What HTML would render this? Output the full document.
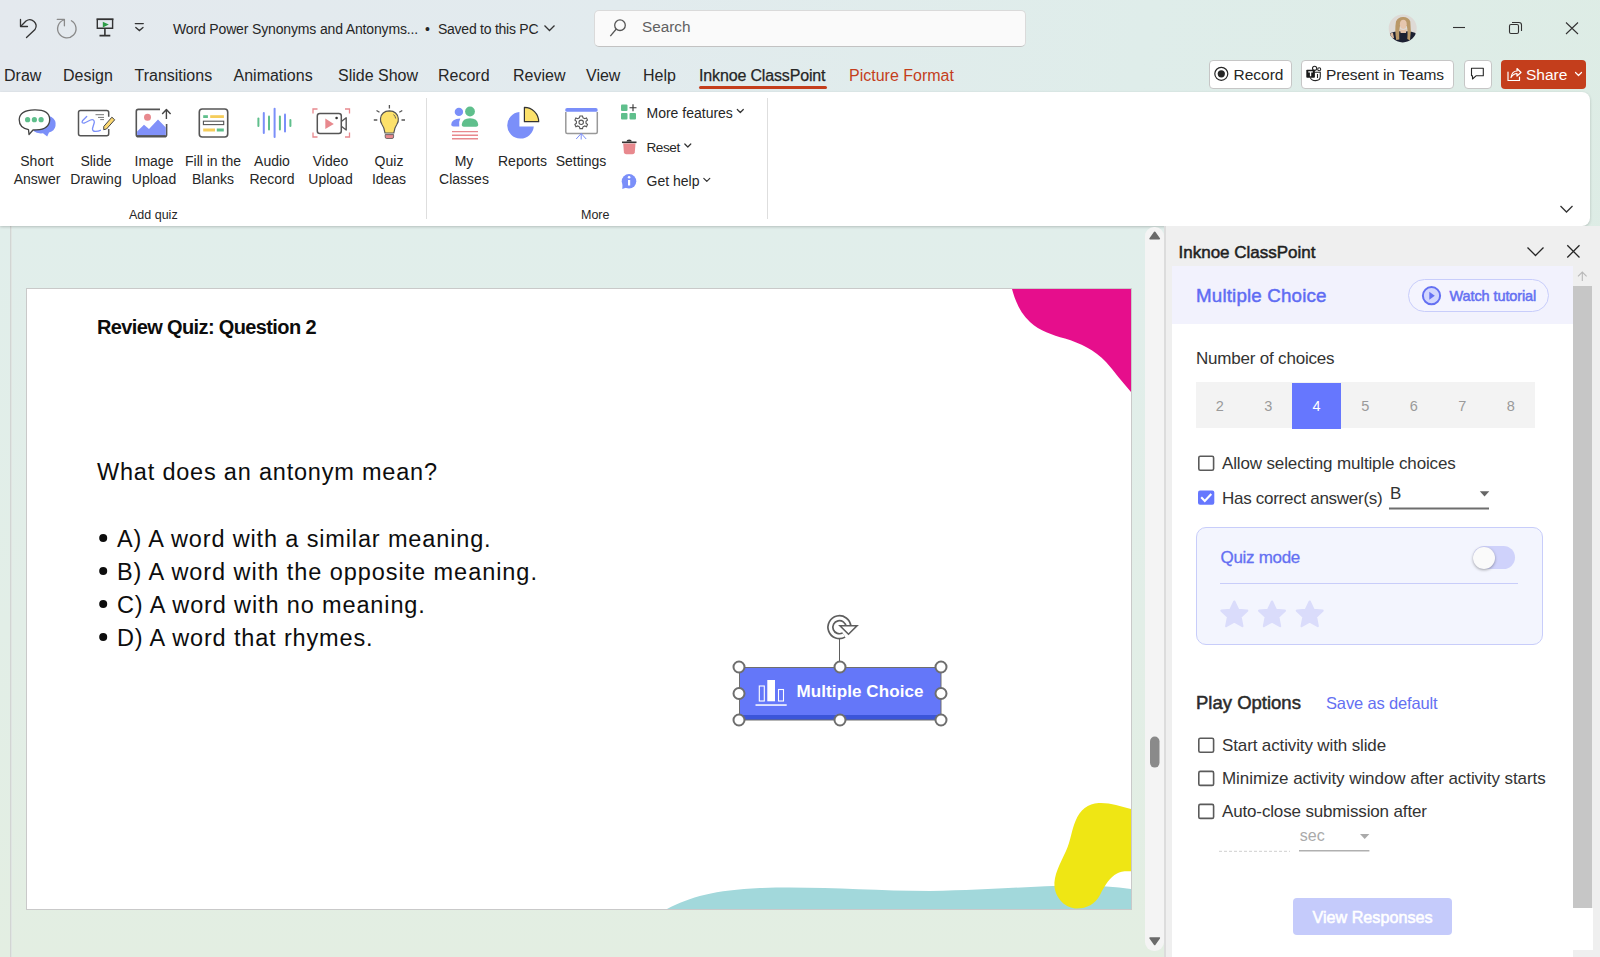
<!DOCTYPE html>
<html><head><meta charset="utf-8">
<style>
*{box-sizing:border-box;margin:0;padding:0}
html,body{width:1600px;height:957px;overflow:hidden}
body{position:relative;font-family:"Liberation Sans",sans-serif;color:#262626;
background:linear-gradient(100deg,#e4e9ee 0%,#e2ebee 35%,#dfedea 65%,#ddece4 100%)}
.a{position:absolute}
.t{position:absolute;line-height:1;white-space:nowrap}
svg{position:absolute;overflow:visible}
#canvasbg{left:0;top:226px;width:1166px;height:731px;background:linear-gradient(180deg,#e1eeeb 0%,#e2eee7 55%,#e3eee2 100%)}
#ribbon{left:0;top:92px;width:1590px;height:134px;background:#fff;border-radius:0 8px 8px 0;box-shadow:0 1px 3px rgba(0,0,0,.2)}
#slide{left:26px;top:288px;width:1106px;height:622px;background:#fff;border:1px solid #c9c9c9;overflow:hidden}
#pane{left:1164px;top:226px;width:436px;height:731px;background:#efefef;border-left:2px solid #dcdcdc}
.tab{font-size:16px;color:#262626;top:68px}
.lbl{font-size:14px;color:#262626;text-align:center}
.btn{position:absolute;background:#fff;border:1px solid #c6c6c6;border-radius:4px;top:60px;height:29px}
</style></head><body>
<div class="a" id="canvasbg"></div>
<div class="a" style="left:10px;top:226px;width:1px;height:731px;background:#d2d5d3"></div><div class="a" style="left:11px;top:226px;width:1px;height:731px;background:#dfe5e2"></div>

<!-- ===== TITLE BAR ===== -->
<svg style="left:0;top:0" width="160" height="50" viewBox="0 0 160 50">
  <g fill="none" stroke="#333" stroke-width="1.3" stroke-linecap="round" stroke-linejoin="round">
    <path d="M20.5 19.5 V26.5 H27.5"/>
    <path d="M20.8 26.2 L26 21 A6.3 6.3 0 0 1 35 29.5 L26.5 37.5"/>
  </g>
  <g fill="none" stroke="#8a8a8a" stroke-width="1.3" stroke-linecap="round" stroke-linejoin="round">
    <path d="M57.3 19.4 H64.4 V25.8"/>
    <path d="M63.8 20 A9.2 9.2 0 1 0 71.4 20.7"/>
  </g>
  <g fill="none" stroke="#333" stroke-width="1.4">
    <path d="M96.5 19.2 H113.5" stroke-width="1.8"/>
    <path d="M97.3 19.5 V28.3 H112.6 V19.5"/>
    <path d="M104.9 28.3 V35.5 M99.5 35.6 H110.3" stroke-width="1.6"/>
  </g>
  <path d="M102.8 21.8 L108.8 24.6 L102.8 27.4Z" fill="#2c9c46"/>
  <g fill="none" stroke="#333" stroke-width="1.3" stroke-linecap="round">
    <path d="M135.3 23.6 H143.3"/>
    <path d="M135.8 27.4 L139.4 30.6 L143 27.4"/>
  </g>
</svg>
<div class="t" style="left:173px;top:22px;font-size:14px;color:#262626;letter-spacing:-0.15px">Word Power Synonyms and Antonyms...</div>
<div class="t" style="left:425px;top:22px;font-size:14px;color:#262626">•</div>
<div class="t" style="left:438px;top:22px;font-size:14px;color:#262626;letter-spacing:-0.25px">Saved to this PC</div>
<svg style="left:0;top:0" width="600" height="50"><path d="M544.5 25.5 L549.5 30.5 L554.5 25.5" fill="none" stroke="#333" stroke-width="1.3"/></svg>

<div class="a" style="left:594px;top:10px;width:432px;height:37px;background:#fafafa;border:1px solid #dadada;border-bottom-color:#c2c2c2;border-radius:5px"></div>
<svg style="left:0;top:0" width="700" height="50"><g fill="none" stroke="#555" stroke-width="1.3"><circle cx="620" cy="25.2" r="5.3"/><path d="M616.3 29 L610.3 36.2"/></g></svg>
<div class="t" style="left:642px;top:19px;font-size:15.3px;color:#616161">Search</div>

<svg style="left:0;top:0" width="1600" height="50">
  <defs><clipPath id="av"><circle cx="1402.7" cy="28.4" r="14"/></clipPath></defs>
  <g clip-path="url(#av)">
    <rect x="1388" y="14" width="30" height="30" fill="#dedad6"/>
    <path d="M1388 44 L1390.5 33 Q1396 30.5 1403 31.5 Q1410 30.5 1415.5 33 L1418 44Z" fill="#1b2032"/>
    <path d="M1390 35 Q1391 32 1393 33 L1394 38 Q1391 39 1390 35Z" fill="#d9b9a0"/>
    <path d="M1396.2 40 Q1394.5 30 1396 21.5 Q1398 16.8 1403.3 17 Q1408.5 17 1410.3 21.5 Q1411.5 30 1410 40.5 L1407.3 39 Q1408 30 1406.8 26 L1400 26 Q1399 30 1399.3 39.5Z" fill="#b99868"/>
    <ellipse cx="1403.3" cy="24.3" rx="3.4" ry="4.6" fill="#e6c6ae"/>
    <path d="M1400 29 Q1403.3 31 1406.6 29 L1406 33 H1400.6Z" fill="#e2c1a8"/>
  </g>
  <g fill="none" stroke="#333" stroke-width="1.1">
    <path d="M1453 27.5 H1465"/>
    <rect x="1509.5" y="24.5" width="9" height="9" rx="1.5"/>
    <path d="M1512 22.5 H1519 Q1521.5 22.5 1521.5 25 V31"/>
    <path d="M1566 22.5 L1578 34 M1578 22.5 L1566 34"/>
  </g>
</svg>

<!-- ===== TABS ===== -->
<div class="t tab" style="left:4px">Draw</div>
<div class="t tab" style="left:63px">Design</div>
<div class="t tab" style="left:134.5px">Transitions</div>
<div class="t tab" style="left:233.5px">Animations</div>
<div class="t tab" style="left:338px">Slide Show</div>
<div class="t tab" style="left:438px">Record</div>
<div class="t tab" style="left:513px">Review</div>
<div class="t tab" style="left:586px">View</div>
<div class="t tab" style="left:643px">Help</div>
<div class="t tab" style="left:699px;letter-spacing:-0.15px;-webkit-text-stroke:0.25px #262626">Inknoe ClassPoint</div>
<div class="a" style="left:699px;top:86px;width:128px;height:3px;background:#c43e1c;border-radius:2px"></div>
<div class="t tab" style="left:849px;color:#c43e1c">Picture Format</div>

<div class="btn" style="left:1209px;width:83px"></div>
<svg style="left:0;top:0" width="1600" height="95"><circle cx="1221.3" cy="73.8" r="6.5" fill="none" stroke="#262626" stroke-width="1.2"/><circle cx="1221.3" cy="73.8" r="3.6" fill="#262626"/></svg>
<div class="t" style="left:1233.5px;top:66.5px;font-size:15.5px;color:#262626">Record</div>
<div class="btn" style="left:1301px;width:153px"></div>
<svg style="left:0;top:0" width="1600" height="95">
  <g fill="none" stroke="#262626" stroke-width="1.1"><circle cx="1314.6" cy="68.3" r="2.1"/><circle cx="1319.2" cy="69.3" r="1.5"/><path d="M1314.7 72.3 H1320.3 V76.5 Q1320.3 80.6 1315.5 80.6 Q1311.5 80.6 1310.3 77.6"/><path d="M1317.5 74 V78"/></g>
  <rect x="1306.3" y="69.7" width="8.6" height="8" rx="0.8" fill="#1a1a1a"/>
  <path d="M1308.3 71.8 H1312.8 M1310.55 71.8 V76.3" stroke="#fff" stroke-width="1.3"/>
</svg>
<div class="t" style="left:1326px;top:66.5px;font-size:15.5px;color:#262626;letter-spacing:-0.1px">Present in Teams</div>
<div class="btn" style="left:1464px;width:28px"></div>
<svg style="left:0;top:0" width="1600" height="95"><path d="M1471.5 68.3 H1483.3 V75.8 H1476 L1472.5 79 V75.8 H1471.5Z" fill="none" stroke="#262626" stroke-width="1.1" stroke-linejoin="round"/></svg>
<div class="a" style="left:1501px;top:60px;width:85px;height:29px;background:#c43e1c;border-radius:4px"></div>
<svg style="left:0;top:0" width="1600" height="95"><g fill="none" stroke="#fff" stroke-width="1.2" stroke-linejoin="round" stroke-linecap="round"><path d="M1508 72 V80.5 H1519.5 V77"/><path d="M1511 77.5 Q1512 71 1517 71 V68.5 L1521 72.5 L1517 76 V73.5 Q1513.5 73.5 1511 77.5Z"/><path d="M1575.5 72.5 L1578.5 75.5 L1581.5 72.5"/></g></svg>
<div class="t" style="left:1526px;top:66.5px;font-size:15.5px;color:#fff">Share</div>

<!-- ===== RIBBON ===== -->
<div class="a" id="ribbon"></div>
<div class="a" style="left:426px;top:98px;width:1px;height:121px;background:#dedede"></div>
<div class="a" style="left:767px;top:98px;width:1px;height:121px;background:#dedede"></div>
<div class="t lbl" style="left:7px;top:151.6px;width:60px;line-height:18.5px">Short<br>Answer</div>
<div class="t lbl" style="left:66px;top:151.6px;width:60px;line-height:18.5px">Slide<br>Drawing</div>
<div class="t lbl" style="left:124px;top:151.6px;width:60px;line-height:18.5px">Image<br>Upload</div>
<div class="t lbl" style="left:178px;top:151.6px;width:70px;line-height:18.5px">Fill in the<br>Blanks</div>
<div class="t lbl" style="left:242px;top:151.6px;width:60px;line-height:18.5px">Audio<br>Record</div>
<div class="t lbl" style="left:300.5px;top:151.6px;width:60px;line-height:18.5px">Video<br>Upload</div>
<div class="t lbl" style="left:359px;top:151.6px;width:60px;line-height:18.5px">Quiz<br>Ideas</div>
<div class="t lbl" style="left:434px;top:151.6px;width:60px;line-height:18.5px">My<br>Classes</div>
<div class="t lbl" style="left:492.5px;top:151.6px;width:60px;line-height:18.5px">Reports</div>
<div class="t lbl" style="left:551px;top:151.6px;width:60px;line-height:18.5px">Settings</div>
<div class="t" style="left:129px;top:209px;font-size:12.5px;color:#262626">Add quiz</div>
<div class="t" style="left:581px;top:209px;font-size:12.5px;color:#262626">More</div>
<div class="t" style="left:646.5px;top:105.5px;font-size:14px;color:#262626">More features</div>
<div class="t" style="left:646.5px;top:140.5px;font-size:13.6px;color:#262626;letter-spacing:-0.45px">Reset</div>
<div class="t" style="left:646.5px;top:174.4px;font-size:14px;color:#262626">Get help</div>
<svg style="left:0;top:0" width="1600" height="230">
  <g fill="none" stroke="#333" stroke-width="1.2" stroke-linecap="round" stroke-linejoin="round">
    <path d="M737.3 109.5 L740.3 112.5 L743.3 109.5"/>
    <path d="M684.8 144 L687.8 147 L690.8 144"/>
    <path d="M703.8 178.3 L706.8 181.3 L709.8 178.3"/>
  </g>
  <g fill="#5fbf8c"><rect x="621" y="104.5" width="6.5" height="6.5" rx="1"/><rect x="621" y="113" width="6.5" height="6.5" rx="1"/><rect x="629.5" y="113" width="6.5" height="6.5" rx="1"/></g>
  <path d="M633 104.3 V111.3 M629.5 107.8 H636.5" stroke="#333" stroke-width="1.1"/>
  <path d="M623.2 143.5 H635.5 L634.8 152.3 Q634.5 154.3 632.5 154.3 H626.2 Q624.2 154.3 623.9 152.3Z" fill="#e8898e"/>
  <path d="M622 142.3 H636.5" stroke="#333" stroke-width="1.6"/>
  <path d="M626.5 141.5 Q626.5 139.6 629.2 139.6 Q631.8 139.6 631.8 141.5Z" fill="#333"/>
  <circle cx="629" cy="181.3" r="7.3" fill="#7b8ff9"/>
  <path d="M622.5 184 L622.3 189 L626.5 187.5Z" fill="#7b8ff9"/>
  <rect x="628" y="180" width="2.2" height="5.5" fill="#fff"/><circle cx="629.1" cy="177.3" r="1.3" fill="#fff"/>

  <!-- short answer -->
  <path d="M40 118 Q46 114 51.5 117 Q56.5 120 55.5 126 Q54.5 131 49 132.5 L47.2 136.5 L43 133.3 Q37 134 33.5 131 Z" fill="#7b8ff9"/>
  <path d="M34.5 109.8 Q49.5 109.5 49.7 119.5 Q49.5 129.5 36.5 129.8 L33 130 L29 134.5 L28.5 129.6 Q19.2 128 19.2 119.6 Q19.5 110 34.5 109.8Z" fill="#fff" stroke="#444" stroke-width="1.3" stroke-linejoin="round"/>
  <g fill="#5fbf8c"><circle cx="27.6" cy="119.7" r="2.6"/><circle cx="34.4" cy="119.7" r="2.6"/><circle cx="41.1" cy="119.7" r="2.6"/></g>
  <!-- slide drawing -->
  <path d="M108.7 116.7 V112.5 Q108.7 110.5 106.7 110.5 H80.5 Q78.5 110.5 78.5 112.5 V133.7 Q78.5 135.7 80.5 135.7 H106.7 Q108.7 135.7 108.7 133.7 V129.1" fill="none" stroke="#555" stroke-width="1.5"/>
  <path d="M86.7 116.5 L82.5 120.8 Q81 123.3 84.5 123 L90.5 120 Q94.5 118.8 94.3 122.5 L92.5 128.5 Q92.3 131.5 95.5 131.4 Q98.5 131.2 100.4 130.3" fill="none" stroke="#7b8ff9" stroke-width="1.3" stroke-linecap="round" stroke-linejoin="round"/>
  <path d="M95.5 114.7 H104 M98 117.4 H104 M100.2 119.6 H104" stroke="#777" stroke-width="1"/>
  <path d="M103.8 126.4 L111.9 117.2 L114.7 119.8 L106.5 129 L103.7 129.7 Z" fill="#fcd871" stroke="#444" stroke-width="1" stroke-linejoin="round"/>
  <!-- image upload -->
  <path d="M160 109.4 H138.3 Q136.3 109.4 136.3 111.4 V134.7 Q136.3 136.7 138.3 136.7 H164.6 Q166.6 136.7 166.6 134.7 V124" fill="none" stroke="#555" stroke-width="1.6"/>
  <path d="M137.1 131.5 L144 124.8 L149 129 L158 119.5 L165.8 127.5 V135.9 H137.1Z" fill="#8191f9"/>
  <path d="M137 135.9 H165.8" stroke="#555" stroke-width="1.6"/>
  <circle cx="147.5" cy="117.3" r="3.5" fill="#e8898e"/>
  <path d="M166.4 119 V109.8 M162.2 114 L166.4 109.6 L170.6 114" fill="none" stroke="#444" stroke-width="1.4" stroke-linejoin="round"/>
  <!-- fill blanks -->
  <rect x="199.3" y="109" width="28.4" height="28" rx="3" fill="none" stroke="#555" stroke-width="1.6"/>
  <rect x="203.2" y="115.2" width="4.7" height="2.8" fill="#5fbf8c"/><rect x="210.2" y="115.2" width="13.7" height="2.8" fill="#f5cd5b"/>
  <rect x="203.4" y="121.2" width="20.3" height="3.4" fill="none" stroke="#555" stroke-width="1.1"/>
  <rect x="203.2" y="128.5" width="11.8" height="3" fill="#f5cd5b"/><rect x="216.8" y="128.5" width="7" height="3" fill="#5fbf8c"/>
  <!-- audio -->
  <g stroke-width="2" stroke-linecap="round">
    <path d="M258.4 118.5 V126" stroke="#5fbf8c"/><path d="M263.8 113 V133" stroke="#7b8ff9"/>
    <path d="M269 116.5 V129.5" stroke="#5fbf8c"/><path d="M274.6 108.8 V137" stroke="#7b8ff9"/>
    <path d="M279.9 116.5 V129.5" stroke="#5fbf8c"/><path d="M285 114.5 V131.5" stroke="#7b8ff9"/>
    <path d="M290.4 120 V126" stroke="#5fbf8c"/>
  </g>
  <!-- video -->
  <path d="M313 113.5 V109 H317.5 M345 109 H349.5 V113.5 M313 132.5 V137 H317.5 M345 137 H349.5 V132.5" fill="none" stroke="#e8898e" stroke-width="1.3"/>
  <rect x="317.3" y="113.5" width="24" height="20" rx="2.5" fill="none" stroke="#555" stroke-width="1.5"/>
  <path d="M341.3 121.5 L346.2 117.8 V130 L341.3 126.2" fill="none" stroke="#555" stroke-width="1.4" stroke-linejoin="round"/>
  <path d="M325.3 118.5 L333.8 124 L325.3 129Z" fill="#e8898e"/>
  <circle cx="336.6" cy="118" r="1.3" fill="#333"/>
  <!-- bulb -->
  <path d="M389.4 105 V108.5 M376.5 110.5 L379.5 112.3 M402.3 110.5 L399.3 112.3 M373.8 120 H377.3 M401.5 120 H405" stroke="#555" stroke-width="1.3"/>
  <path d="M385 133 Q384.5 128 382 124.5 Q380 121.5 380.5 118.5 Q381.5 111 389.4 110.8 Q397.3 111 398.3 118.5 Q398.8 121.5 396.8 124.5 Q394.3 128 393.8 133Z" fill="#fce16b" stroke="#555" stroke-width="1.2"/>
  <path d="M393.5 114.5 Q395.3 116 395.7 118.5" fill="none" stroke="#555" stroke-width="0.9"/>
  <rect x="385" y="133" width="8.8" height="1.6" fill="#aaa"/>
  <path d="M385.2 134.6 H393.6 V137 Q393.6 138.5 392 138.5 H386.8 Q385.2 138.5 385.2 137Z" fill="#e8898e" stroke="#555" stroke-width="0.8"/>
  <!-- my classes -->
  <circle cx="458.9" cy="111.9" r="4.2" fill="#7b8ff9"/>
  <circle cx="470" cy="111.5" r="4.9" fill="#5fbf8c"/>
  <path d="M460.3 118.5 Q451.5 119 451.2 124.5 Q451.2 126.6 453.5 126.6 H459.3 Q458.5 121.5 460.3 118.5Z" fill="#7b8ff9"/>
  <path d="M461.8 124.3 Q462.5 118.3 470 118.3 Q477.5 118.3 478.2 124.3 Q478.5 126.7 476 126.7 H464 Q461.5 126.7 461.8 124.3Z" fill="#5fbf8c"/>
  <path d="M452 131.6 H478 M452 135.2 H478 M452 138.7 H478" stroke="#e8898e" stroke-width="1.4"/>
  <!-- reports -->
  <path d="M519.4 112 V126.4 H533.8 A13.3 13.3 0 1 1 519.4 112Z" fill="#7b8ff9"/>
  <path d="M524.4 107.4 A14.3 14.3 0 0 1 538.7 121.7 H524.4Z" fill="#fce16b" stroke="#333" stroke-width="1.2" stroke-linejoin="round"/>
  <!-- settings -->
  <rect x="565.2" y="108" width="32.5" height="3.8" rx="1.9" fill="#7b8ff9"/>
  <path d="M565.8 112 V132 Q565.8 133.5 567.3 133.5 H595.8 Q597.3 133.5 597.3 132 V112" fill="none" stroke="#999" stroke-width="1.5"/>
  <path d="M581.2 133.5 V139.5 M581.2 133.5 L576.2 139 M581.2 133.5 L586.2 139" stroke="#7b8ff9" stroke-width="1"/>
  <g transform="translate(581.2 122.3)" fill="none" stroke="#555" stroke-width="1.1">
    <path d="M-1.3 -6.3 H1.3 L1.8 -4.5 L3.6 -3.6 L5.3 -4.4 L6.3 -2.2 L4.8 -1 V1 L6.3 2.2 L5.3 4.4 L3.6 3.6 L1.8 4.5 L1.3 6.3 H-1.3 L-1.8 4.5 L-3.6 3.6 L-5.3 4.4 L-6.3 2.2 L-4.8 1 V-1 L-6.3 -2.2 L-5.3 -4.4 L-3.6 -3.6 L-1.8 -4.5Z"/>
    <circle r="2.2"/>
  </g>
  <path d="M1560.5 206 L1566.5 212 L1572.5 206" fill="none" stroke="#333" stroke-width="1.3"/>
</svg>

<!-- ===== SLIDE ===== -->
<div class="a" id="slide"></div>
<svg style="left:0;top:0" width="1600" height="957">
  <path d="M1012 289 C1015 300 1020 313 1030 322 C1040 331 1052 335 1065 338.5 C1080 343 1095 350 1106 362 C1114 371 1122 382 1131 392 V289Z" fill="#e60e8c"/>
  <path d="M667 909 C690 897 715 890 760 888 C820 886 870 891 930 891 C990 890 1030 886 1075 885.5 C1100 885.5 1115 887 1131 889 V909Z" fill="#a2d8db"/>
  <path d="M1098.7 803 C1110 802.5 1120 806 1131 809 V871.3 C1125 871 1120 871.5 1117 873.5 C1110 877 1105 885 1100 895 C1095 904 1087 908.5 1077 908.5 C1066 908.5 1056 899 1054.5 887 C1053.5 875 1060 864 1066 851 C1071 840 1071.5 830 1075.5 821 C1080 810 1088 803.5 1098.7 803Z" fill="#efe614"/>
</svg>
<div class="t" style="left:97px;top:317.1px;font-size:20px;font-weight:700;color:#0d0d0d;letter-spacing:-0.63px">Review Quiz: Question 2</div>
<div class="t" style="left:97px;top:461px;font-size:23.5px;color:#0d0d0d;letter-spacing:0.8px">What does an antonym mean?</div>
<div class="t" style="left:117px;top:527.6px;font-size:23.5px;color:#0d0d0d;letter-spacing:0.86px">A) A word with a similar meaning.</div>
<div class="t" style="left:117px;top:560.6px;font-size:23.5px;color:#0d0d0d;letter-spacing:0.95px">B) A word with the opposite meaning.</div>
<div class="t" style="left:117px;top:593.6px;font-size:23.5px;color:#0d0d0d;letter-spacing:0.87px">C) A word with no meaning.</div>
<div class="t" style="left:117px;top:626.6px;font-size:23.5px;color:#0d0d0d;letter-spacing:0.85px">D) A word that rhymes.</div>
<svg style="left:0;top:0" width="1600" height="957">
  <g fill="#0d0d0d"><circle cx="103.2" cy="537.9" r="4"/><circle cx="103.2" cy="570.9" r="4"/><circle cx="103.2" cy="603.9" r="4"/><circle cx="103.2" cy="636.9" r="4"/></g>
  <rect x="739" y="667" width="202" height="53" fill="#6477f9"/>
  <rect x="739" y="715" width="202" height="5" fill="#3b55d9"/>
  <rect x="739.5" y="667.5" width="201.5" height="52.5" fill="none" stroke="#6e6e6e" stroke-width="1"/>
  <g fill="none" stroke="#fff" stroke-width="1.1"><rect x="759.3" y="686" width="5" height="15"/><rect x="778.5" y="689.5" width="5" height="11.5"/></g>
  <rect x="767.3" y="680" width="7.7" height="21.3" fill="#fff"/>
  <rect x="755.5" y="704.3" width="31.2" height="1.5" fill="#fff"/>
  <path d="M839.5 638 V661" stroke="#5e5e5e" stroke-width="1"/>
  <path d="M848.4 626.5 A9 9 0 1 0 843.9 635" fill="none" stroke="#5e5e5e" stroke-width="6.6"/>
  <path d="M848.4 626.5 A9 9 0 1 0 843.9 635" fill="none" stroke="#fff" stroke-width="3.2"/>
  <path d="M840 625.7 L857 625.7 L848.5 634.2Z" fill="#fff" stroke="#5e5e5e" stroke-width="1.6" stroke-linejoin="miter"/>
  <g fill="#fff" stroke="#6e6e6e" stroke-width="2">
    <circle cx="739" cy="667" r="5.5"/><circle cx="840" cy="667" r="5.5"/><circle cx="941" cy="667" r="5.5"/>
    <circle cx="739" cy="693.5" r="5.5"/><circle cx="941" cy="693.5" r="5.5"/>
    <circle cx="739" cy="720" r="5.5"/><circle cx="840" cy="720" r="5.5"/><circle cx="941" cy="720" r="5.5"/>
  </g>
</svg>
<div class="t" style="left:796.5px;top:682.8px;font-size:17px;font-weight:700;color:#fff;letter-spacing:0.1px">Multiple Choice</div>

<!-- ===== PANE ===== -->
<div class="a" id="pane"></div>
<div class="a" style="left:1145px;top:226.5px;width:19px;height:724px;background:#f4f4f4;border-radius:9px"></div>
<svg style="left:0;top:0" width="1600" height="957">
  <path d="M1154.7 232.3 L1159.3 238.7 H1150.1Z" fill="#6b6b6b" stroke="#6b6b6b" stroke-width="1.6" stroke-linejoin="round"/>
  <path d="M1154.7 944.5 L1159.3 938 H1150.1Z" fill="#6b6b6b" stroke="#6b6b6b" stroke-width="1.6" stroke-linejoin="round"/>
  <rect x="1150" y="736.6" width="9.5" height="31" rx="4.75" fill="#8a8a8a"/>
</svg>
<div class="a" style="left:1172px;top:266px;width:401px;height:58px;background:#f2f2fd"></div>
<div class="a" style="left:1172px;top:324px;width:401px;height:633px;background:#fff"></div>
<div class="a" style="left:1573px;top:908px;width:20px;height:42px;background:#fff"></div>
<div class="a" style="left:1573px;top:286px;width:19px;height:622px;background:#c6c6c6"></div>
<svg style="left:0;top:0" width="1600" height="957">
  <path d="M1582.3 281 V272.3 M1578 276.3 L1582.3 272 L1586.6 276.3" fill="none" stroke="#b8b8b8" stroke-width="1.1"/>
  <g fill="none" stroke="#262626" stroke-width="1.3"><path d="M1527.5 247.5 L1535.5 255.5 L1543.5 247.5"/><path d="M1567.3 245.3 L1579.5 257.5 M1579.5 245.3 L1567.3 257.5"/></g>
</svg>
<div class="t" style="left:1178.5px;top:243.6px;font-size:17px;color:#1f1f1f;letter-spacing:0px;-webkit-text-stroke:0.5px #1f1f1f">Inknoe ClassPoint</div>
<div class="t" style="left:1196px;top:286.8px;font-size:18.8px;color:#5f6cf3;letter-spacing:0.15px;-webkit-text-stroke:0.45px #5f6cf3">Multiple Choice</div>
<div class="a" style="left:1408px;top:279px;width:141px;height:33px;border:1px solid #c8cdfb;border-radius:17px;background:#f4f4fe"></div>
<svg style="left:0;top:0" width="1600" height="957"><circle cx="1431.5" cy="295.7" r="8.6" fill="#d3d7fd" stroke="#6470f2" stroke-width="2"/><path d="M1429.3 291.7 L1434.8 295.7 L1429.3 299.7Z" fill="#6470f2"/></svg>
<div class="t" style="left:1449.5px;top:289.2px;font-size:14.5px;color:#6470f2;letter-spacing:-0.1px;-webkit-text-stroke:0.5px #6470f2">Watch tutorial</div>

<div class="t" style="left:1196px;top:349.6px;font-size:17px;color:#333;letter-spacing:-0.2px">Number of choices</div>
<div class="a" style="left:1195.5px;top:382px;width:339.5px;height:45.5px;background:#f3f3f3"></div>
<div class="a" style="left:1292px;top:383px;width:49px;height:46px;background:#6677fe"></div>
<div class="t" style="left:1195.5px;top:399.1px;width:48.5px;text-align:center;font-size:14.5px;color:#9a9a9a">2</div>
<div class="t" style="left:1244px;top:399.1px;width:48.5px;text-align:center;font-size:14.5px;color:#9a9a9a">3</div>
<div class="t" style="left:1292px;top:399.1px;width:49px;text-align:center;font-size:14.5px;color:#fff">4</div>
<div class="t" style="left:1341px;top:399.1px;width:48.5px;text-align:center;font-size:14.5px;color:#9a9a9a">5</div>
<div class="t" style="left:1389.5px;top:399.1px;width:48.5px;text-align:center;font-size:14.5px;color:#9a9a9a">6</div>
<div class="t" style="left:1438px;top:399.1px;width:48.5px;text-align:center;font-size:14.5px;color:#9a9a9a">7</div>
<div class="t" style="left:1486.5px;top:399.1px;width:48.5px;text-align:center;font-size:14.5px;color:#9a9a9a">8</div>

<svg style="left:0;top:0" width="1600" height="957">
  <g fill="none" stroke="#5a5a5a" stroke-width="1.6">
    <rect x="1198.8" y="456.2" width="14.8" height="14" rx="1.5"/>
    <rect x="1198.8" y="738.3" width="14.8" height="14" rx="1.5"/>
    <rect x="1198.8" y="771.4" width="14.8" height="14" rx="1.5"/>
    <rect x="1198.8" y="804.4" width="14.8" height="14" rx="1.5"/>
  </g>
  <rect x="1198" y="490.4" width="16.3" height="14.3" rx="2" fill="#6677fe"/>
  <path d="M1201.2 497.3 L1204.8 500.9 L1211.3 494" fill="none" stroke="#fff" stroke-width="2.1"/>
  <rect x="1389" y="507.5" width="100" height="2" fill="#6e6e6e"/>
  <path d="M1479.8 491.2 H1489.3 L1484.55 496.6Z" fill="#666"/>
  <rect x="1299" y="850" width="70.4" height="1.5" fill="#b0b0b0"/>
  <path d="M1360 834 H1369.4 L1364.7 839Z" fill="#aaa"/>
  <path d="M1219 851.3 H1290" stroke="#cfcfcf" stroke-width="1" stroke-dasharray="3 2"/>
</svg>
<div class="t" style="left:1222px;top:454.6px;font-size:17px;color:#333;letter-spacing:-0.14px">Allow selecting multiple choices</div>
<div class="t" style="left:1222px;top:489.7px;font-size:17px;color:#333;letter-spacing:-0.28px">Has correct answer(s)</div>
<div class="t" style="left:1390px;top:485.2px;font-size:17px;color:#333">B</div>

<div class="a" style="left:1195.5px;top:527px;width:347px;height:117.5px;background:#f3f5fe;border:1px solid #c8cdfa;border-radius:10px"></div>
<div class="t" style="left:1220.5px;top:549px;font-size:17px;color:#6470f2;letter-spacing:-0.3px;-webkit-text-stroke:0.3px #6470f2">Quiz mode</div>
<div class="a" style="left:1473px;top:546.4px;width:42.3px;height:23px;border-radius:12px;background:#cfd2fb"></div>
<div class="a" style="left:1472.5px;top:546.5px;width:22.5px;height:22.5px;border-radius:50%;background:#fafafa;box-shadow:0 1px 3px rgba(0,0,0,.35)"></div>
<div class="a" style="left:1220px;top:582.8px;width:298px;height:1px;background:#c8cdfa"></div>
<svg style="left:0;top:0" width="1600" height="957">
  <defs><path id="star" d="M0 -13.3 L4 -5 L12.9 -4.2 L6.3 2 L8.1 11.2 L0 6.6 L-8.1 11.2 L-6.3 2 L-12.9 -4.2 L-4 -5Z" stroke-linejoin="round"/></defs>
  <g fill="#dadcfb" stroke="#dadcfb" stroke-width="2.2">
    <use href="#star" x="1234.3" y="614.9"/><use href="#star" x="1272" y="614.9"/><use href="#star" x="1309.7" y="614.9"/>
  </g>
</svg>

<div class="t" style="left:1196px;top:693.6px;font-size:18.5px;color:#2b2b2b;-webkit-text-stroke:0.5px #2b2b2b">Play Options</div>
<div class="t" style="left:1326px;top:695.3px;font-size:16.5px;color:#6470f2;letter-spacing:-0.15px">Save as default</div>
<div class="t" style="left:1222px;top:737.4px;font-size:17px;color:#333;letter-spacing:-0.13px">Start activity with slide</div>
<div class="t" style="left:1222px;top:770.4px;font-size:17px;color:#333;letter-spacing:-0.07px">Minimize activity window after activity starts</div>
<div class="t" style="left:1222px;top:803.2px;font-size:17px;color:#333;letter-spacing:-0.15px">Auto-close submission after</div>
<div class="t" style="left:1299.8px;top:827.5px;font-size:16px;color:#aaa">sec</div>
<div class="a" style="left:1293px;top:898.3px;width:159px;height:36.3px;border-radius:4px;background:#c5cbfb"></div>
<div class="t" style="left:1312.4px;top:908.8px;font-size:16.2px;color:#fff;-webkit-text-stroke:0.55px #fff">View Responses</div>
</body></html>
